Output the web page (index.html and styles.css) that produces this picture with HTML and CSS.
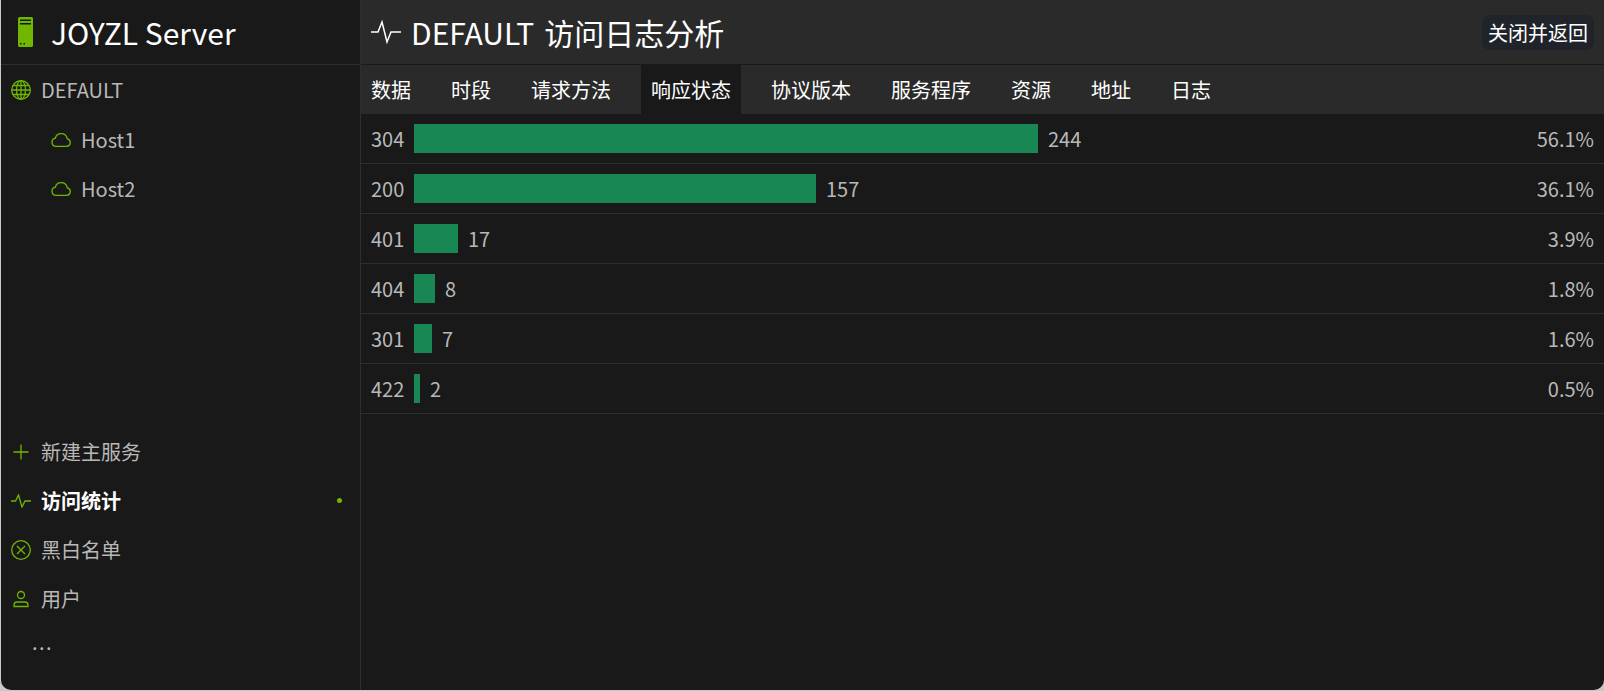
FILE: index.html
```html
<!DOCTYPE html>
<html lang="zh-CN">
<head>
    <meta charset="UTF-8">
    <title>JOYZL Server</title>
    <link rel="stylesheet" href="styles.css">
</head>
<body>
    <div class="window">
        <!-- Sidebar -->
        <aside class="sidebar">
            <div class="brand">
                <svg class="brand-icon" width="15" height="30" viewBox="0 0 15 30">
                    <path fill="#6fb700" d="M1.500 0h12A1.500 1.500 0 0 1 15 1.500v27a1.500 1.500 0 0 1-1.500 1.500h-12A1.500 1.500 0 0 1 0 28.500v-27A1.500 1.500 0 0 1 1.500 0z"/>
                    <path fill="#191919" d="M2 2.500h11v1.500H2zM2 6h11v1.500H2zM2 26h1.500v1.500H2zM5.500 26H7v1.500H5.500z"/>
                </svg>
                <span class="brand-name">JOYZL Server</span>
            </div>
            <ul class="nav nav-top">
                <li class="nav-item">
                    <svg class="icon" width="20" height="20" viewBox="0 0 20 20">
                        <circle cx="10" cy="10" r="9.300"/>
                        <ellipse cx="10" cy="10" rx="4.500" ry="9.300"/>
                        <path d="M10 .7v18.600M.7 10h18.600M2.200 5.500h15.600M2.200 14.500h15.600"/>
                    </svg>
                    <span>DEFAULT</span>
                </li>
                <li class="nav-item sub">
                    <svg class="icon" width="20" height="14" viewBox="0 0 20 14">
                        <path d="M4.500 13.300h11a3.800 3.800 0 0 0 .8-7.500A6.300 6.300 0 0 0 10 .7a5.800 5.800 0 0 0-5.600 4.500A4.100 4.100 0 0 0 4.500 13.300z"/>
                    </svg>
                    <span>Host1</span>
                </li>
                <li class="nav-item sub">
                    <svg class="icon" width="20" height="14" viewBox="0 0 20 14">
                        <path d="M4.500 13.300h11a3.800 3.800 0 0 0 .8-7.500A6.300 6.300 0 0 0 10 .7a5.800 5.800 0 0 0-5.600 4.500A4.100 4.100 0 0 0 4.500 13.300z"/>
                    </svg>
                    <span>Host2</span>
                </li>
            </ul>
            <ul class="nav nav-bottom">
                <li class="nav-item">
                    <svg class="icon" width="20" height="20" viewBox="0 0 20 20">
                        <path d="M10 2.500v15M2.500 10h15"/>
                    </svg>
                    <span>新建主服务</span>
                </li>
                <li class="nav-item current">
                    <svg class="icon" width="20" height="14" viewBox="0 0 20 14">
                        <path d="M0 7h4.500l3-6 3.500 12 3-6h6"/>
                    </svg>
                    <span>访问统计</span>
                    <i class="dot"></i>
                </li>
                <li class="nav-item">
                    <svg class="icon" width="20" height="20" viewBox="0 0 20 20">
                        <circle cx="10" cy="10" r="9.300"/>
                        <path d="M6 6l8 8M14 6l-8 8"/>
                    </svg>
                    <span>黑白名单</span>
                </li>
                <li class="nav-item">
                    <svg class="icon" width="20" height="18" viewBox="0 0 20 18">
                        <circle cx="10" cy="5" r="3.500"/>
                        <path d="M3 16.500v-1.500a3 3 0 0 1 3-3h8a3 3 0 0 1 3 3v1.500z"/>
                    </svg>
                    <span>用户</span>
                </li>
                <li class="nav-item more">...</li>
            </ul>
        </aside>

        <!-- Main -->
        <main class="main">
            <header class="titlebar">
                <svg class="title-icon" width="30" height="24" viewBox="0 0 30 24">
                    <path d="M0 12h7l4-10 5 20 4-10h10"/>
                </svg>
                <h1 class="title">DEFAULT<span class="title-sub">访问日志分析</span></h1>
                <button class="close-button">关闭并返回</button>
            </header>
            <nav class="tabs">
                <a class="tab">数据</a>
                <a class="tab">时段</a>
                <a class="tab">请求方法</a>
                <a class="tab active">响应状态</a>
                <a class="tab">协议版本</a>
                <a class="tab">服务程序</a>
                <a class="tab">资源</a>
                <a class="tab">地址</a>
                <a class="tab">日志</a>
            </nav>
            <section class="rows">
                <div class="row">
                    <span class="code">304</span>
                    <span class="bar" style="width: 624px"></span>
                    <span class="count">244</span>
                    <span class="percent">56.1%</span>
                </div>
                <div class="row">
                    <span class="code">200</span>
                    <span class="bar" style="width: 402px"></span>
                    <span class="count">157</span>
                    <span class="percent">36.1%</span>
                </div>
                <div class="row">
                    <span class="code">401</span>
                    <span class="bar" style="width: 44px"></span>
                    <span class="count">17</span>
                    <span class="percent">3.9%</span>
                </div>
                <div class="row">
                    <span class="code">404</span>
                    <span class="bar" style="width: 21px"></span>
                    <span class="count">8</span>
                    <span class="percent">1.8%</span>
                </div>
                <div class="row">
                    <span class="code">301</span>
                    <span class="bar" style="width: 18px"></span>
                    <span class="count">7</span>
                    <span class="percent">1.6%</span>
                </div>
                <div class="row">
                    <span class="code">422</span>
                    <span class="bar" style="width: 6px"></span>
                    <span class="count">2</span>
                    <span class="percent">0.5%</span>
                </div>
            </section>
        </main>
    </div>
</body>
</html>
```

FILE: styles.css
```css
html, body {
    margin: 0;
    height: 100%;
    overflow: hidden;
    background-color: #c8c8c8;
}

body {
    font-family: "Noto Sans CJK SC", "Noto Sans", sans-serif;
    font-size: 20px;
    color: #b8b8b8;
}

.window {
    display: flex;
    height: 690px;
    margin-left: 1px;
    background-color: #191919;
    border-radius: 0 0 10px 10px;
    overflow: hidden;
}

/* Sidebar */
.sidebar {
    display: flex;
    flex-direction: column;
    width: 360px;
    flex-shrink: 0;
    box-sizing: border-box;
    border-right: 1px solid #2e2e2e;
}

.brand {
    display: flex;
    align-items: center;
    height: 65px;
    flex-shrink: 0;
    box-sizing: border-box;
    padding-left: 17px;
    border-bottom: 1px solid #2e2e2e;
}

.brand-name {
    margin-left: 18px;
    font-size: 30px;
    color: #fff;
}

.nav {
    list-style: none;
    margin: 0;
    padding: 0;
}

.nav-top .nav-item:first-child {
    margin-bottom: 1px;
}

.nav-bottom {
    margin-top: auto;
    padding-bottom: 23px;
}

.nav-item {
    display: flex;
    align-items: center;
    height: 49px;
    padding-left: 10px;
}

.nav-item.sub {
    padding-left: 50px;
}

.nav-item.current {
    font-weight: bold;
    color: #fff;
}

.nav-item.more {
    padding-left: 31px;
    height: 44px;
    align-items: flex-start;
    line-height: 38px;
    letter-spacing: 1.400px;
}

.icon {
    flex-shrink: 0;
    margin-right: 10px;
    fill: none;
    stroke: #6fb700;
    stroke-width: 1.300;
}

.dot {
    width: 5px;
    height: 5px;
    margin-left: auto;
    margin-right: 18px;
    border-radius: 50%;
    background-color: #6fb700;
}

/* Main */
.main {
    flex: 1;
    min-width: 0;
}

.titlebar {
    display: flex;
    align-items: center;
    height: 65px;
    box-sizing: border-box;
    padding: 0 10px;
    background-color: #2a2a2a;
    border-bottom: 1px solid #191919;
}

.title-icon {
    fill: none;
    stroke: #fff;
    stroke-width: 1.500;
    margin-right: 10px;
}

.title {
    flex: 1;
    margin: 0;
    font-size: 30px;
    font-weight: normal;
    color: #fff;
}

.title-sub {
    margin-left: 10px;
}

.close-button {
    height: 35px;
    padding: 0 6px;
    font-family: inherit;
    font-size: 20px;
    color: #fff;
    background-color: #20242a;
    border: none;
    border-radius: 8px;
}

.tabs {
    display: flex;
    height: 49px;
    background-color: #2a2a2a;
}

.tab {
    display: flex;
    align-items: center;
    padding: 0 10px;
    margin-right: 20px;
    color: #fff;
}

.tab.active {
    background-color: #191919;
}

.row {
    display: flex;
    align-items: center;
    height: 50px;
    box-sizing: border-box;
    padding: 0 10px;
    border-bottom: 1px solid #2e2e2e;
}

.code {
    width: 43px;
    flex-shrink: 0;
}

.bar {
    height: 29px;
    flex-shrink: 0;
    background-color: #198754;
}

.count {
    margin-left: 10px;
}

.percent {
    margin-left: auto;
}
```
